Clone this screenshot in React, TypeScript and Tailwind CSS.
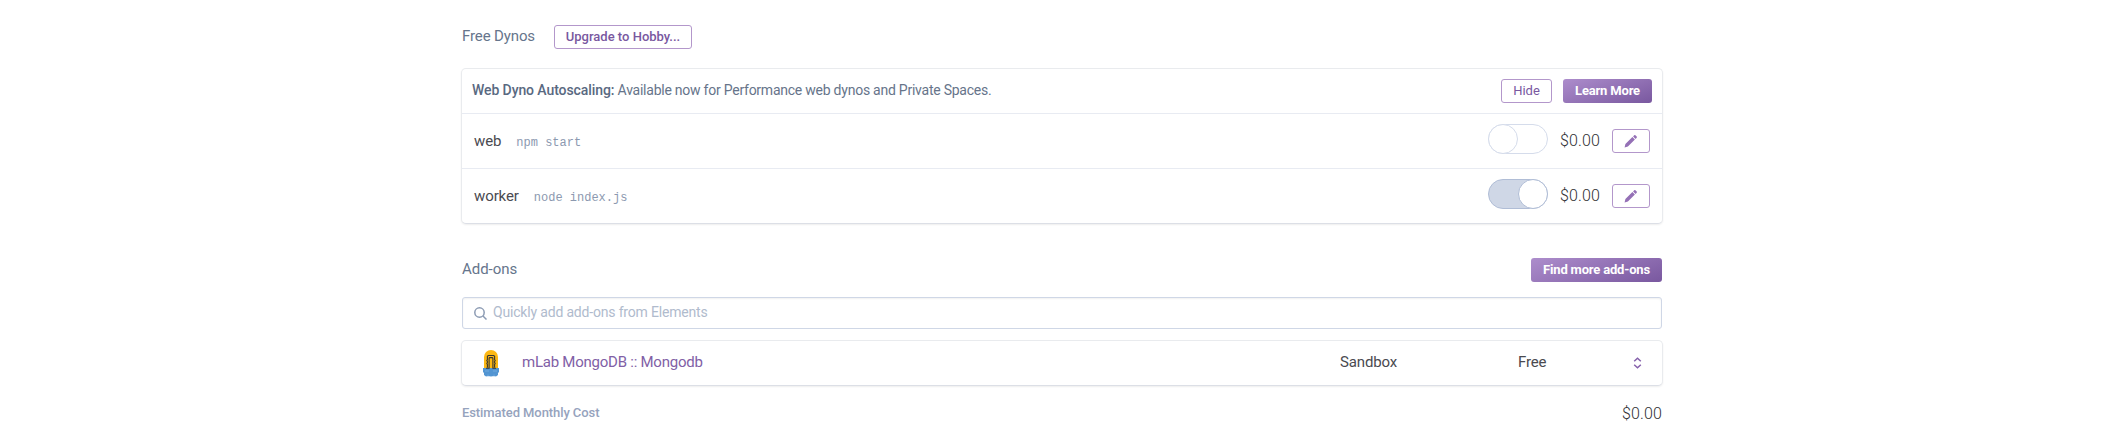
import React from "react";

const cardClass =
  "-mx-px rounded-[5px] border border-[#e9ebee] border-b-[#dcdfe6] bg-white shadow-[0_1px_2px_rgba(0,0,0,0.07)]";
const outlineButton =
  "flex h-6 items-center justify-center rounded-[3px] border border-[#b397cb] bg-white text-[13px] text-[#79589f] whitespace-nowrap";
const solidButton =
  "flex h-6 items-center justify-center rounded-[3px] bg-linear-[160deg] from-[#ad8dcc] to-[#79589f] text-[13px] font-bold tracking-[-0.18px] text-white whitespace-nowrap";

function Toggle({ on }: { on: boolean }) {
  return (
    <button
      className={
        on
          ? "flex h-[30px] w-[60px] justify-end rounded-full border border-[#b0bdd6] bg-[#cfd7e6]"
          : "flex h-[30px] w-[60px] justify-start rounded-full border border-[#d5dceb] bg-white"
      }
    >
      <span
        className={
          on
            ? "-m-px block size-[30px] rounded-full border border-[#b0bdd6] bg-white"
            : "-m-px block size-[30px] rounded-full border border-[#d5dceb] bg-white"
        }
      />
    </button>
  );
}

function Pencil() {
  return (
    <svg width="14" height="14" viewBox="0 0 14 14" fill="#9470b6">
      <path d="M.6 13.4l.8-3.3 7-7 2.5 2.5-7 7zM9.1 2.4l1.1-1.1q.6-.5 1.2 0l1.3 1.3q.5.6 0 1.2l-1.1 1.1z" />
    </svg>
  );
}

function DynoRow({ name, command, on }: { name: string; command: string; on: boolean }) {
  return (
    <div className="flex h-[55px] items-center border-t border-[#e8ebf2] pr-3 pl-3">
      <span className="text-[15px] leading-5 tracking-[-0.1px] text-[#4a4a50]">{name}</span>
      <code className="mt-1 ml-[15px] font-['Liberation_Mono',monospace] text-[12px] leading-5 text-[#8c99b0]">
        {command}
      </code>
      <div className="-mt-[4px] ml-auto">
        <Toggle on={on} />
      </div>
      <span className="ml-3 w-10 text-[16px] leading-5 font-light tracking-[0.15px] text-[#303034]">$0.00</span>
      <button className={outlineButton + " ml-3 w-[38px]"}>
        <Pencil />
      </button>
    </div>
  );
}

function MLabLogo() {
  return (
    <svg width="16" height="28" viewBox="0 0 16 28">
      <path d="M1 20V8a7 7 0 0 1 14 0v12z" fill="#fdb813" />
      <path d="M0 19h16v4l-1 1v2l-2 1.5-2-.5-3 .5-3-.5-2 .5-2-1.5v-2l-1-1z" fill="#5295d2" />
      <path d="M2 22h4M10 22h4M5 25.5v2M11 25.5v2" stroke="#78aee0" strokeWidth=".8" />
      <path
        d="M3 19.3h3.1V9.4q0-.8.8-.8h2.2q.8 0 .8.8v9.9H13M4.4 18.5v-3l-.6-1 .6-1v-1l-.6-1 .6-1V7.2l.9-.7h5.4l.9.7v3.3l.6 1-.6 1v1l.6 1-.6 1v3"
        fill="none"
        stroke="#37362f"
        strokeWidth="1.1"
      />
    </svg>
  );
}

export default function App() {
  return (
    <div className="h-[448px] bg-white font-[Roboto,sans-serif]">
      <main className="ml-[462px] w-[1200px] pt-[25px]">
        <header className="flex h-6 items-center">
          <h2 className="-mt-[2px] w-[92px] text-[15px] leading-5 tracking-[-0.12px] whitespace-nowrap text-[#66758c]">
            Free Dynos
          </h2>
          <button className={outlineButton + " w-[138px] font-medium"}>Upgrade to Hobby...</button>
        </header>

        <section className={cardClass + " mt-[19px]"}>
          <div className="flex h-11 items-center px-[10px]">
            <p className="-mt-[2px] text-[14px] leading-5 tracking-[-0.24px] text-[#66748a]">
              <strong className="font-medium tracking-[-0.09px] text-[#596981]">Web Dyno Autoscaling:</strong> Available now
              for Performance web dynos and Private Spaces.
            </p>
            <button className={outlineButton + " ml-auto w-[51px]"}>Hide</button>
            <button className={solidButton + " ml-[11px] w-[89px]"}>Learn More</button>
          </div>
          <DynoRow name="web" command="npm start" on={false} />
          <DynoRow name="worker" command="node index.js" on={true} />
        </section>

        <header className="mt-[34px] flex h-6 items-center justify-between">
          <h2 className="-mt-[2px] text-[15px] leading-5 tracking-[-0.05px] text-[#66758c]">Add-ons</h2>
          <button className={solidButton + " w-[131px]"}>Find more add-ons</button>
        </header>

        <div className="mt-[15px] flex h-8 items-center rounded-[3px] border border-[#cfd7e6] pl-[11px] shadow-[inset_0_1px_2px_rgba(0,0,0,0.06)]">
          <svg width="13" height="13" viewBox="0 0 13 13" fill="none" stroke="#8c9bb3" strokeWidth="1.5">
            <circle cx="5.5" cy="5.5" r="4.7" />
            <path d="M9 9l3.5 3.5" />
          </svg>
          <span className="-mt-[2px] ml-[6px] text-[14px] leading-5 tracking-[-0.18px] text-[#b0bbcd]">
            Quickly add add-ons from Elements
          </span>
        </div>

        <section className={cardClass + " mt-[11px]"}>
          <div className="flex h-11 items-center">
            <div className="w-[60px] pl-[21px]">
              <MLabLogo />
            </div>
            <a className="-mt-[2px] text-[15px] leading-5 tracking-[-0.24px] text-[#8160a6]">mLab MongoDB :: Mongodb</a>
            <span className="-mt-[2px] ml-auto w-[178px] text-[15px] leading-5 tracking-[-0.15px] text-[#4a4a50]">
              Sandbox
            </span>
            <span className="-mt-[2px] w-[115px] text-[15px] leading-5 tracking-[-0.15px] text-[#4a4a50]">Free</span>
            <svg className="mr-5" width="9" height="12" viewBox="0 0 9 12" fill="none" stroke="#8560ab" strokeWidth="1.5">
              <path d="M1.2 4.2l3.3-3 3.3 3M1.2 7.8l3.3 3 3.3-3" />
            </svg>
          </div>
        </section>

        <footer className="mt-[16px] flex h-6 items-center justify-between">
          <span className="-mt-[2px] text-[13px] leading-5 font-medium tracking-[-0.08px] text-[#96a3bd]">
            Estimated Monthly Cost
          </span>
          <span className="text-[16px] leading-5 font-light tracking-[0.15px] text-[#303034]">$0.00</span>
        </footer>
      </main>
    </div>
  );
}
